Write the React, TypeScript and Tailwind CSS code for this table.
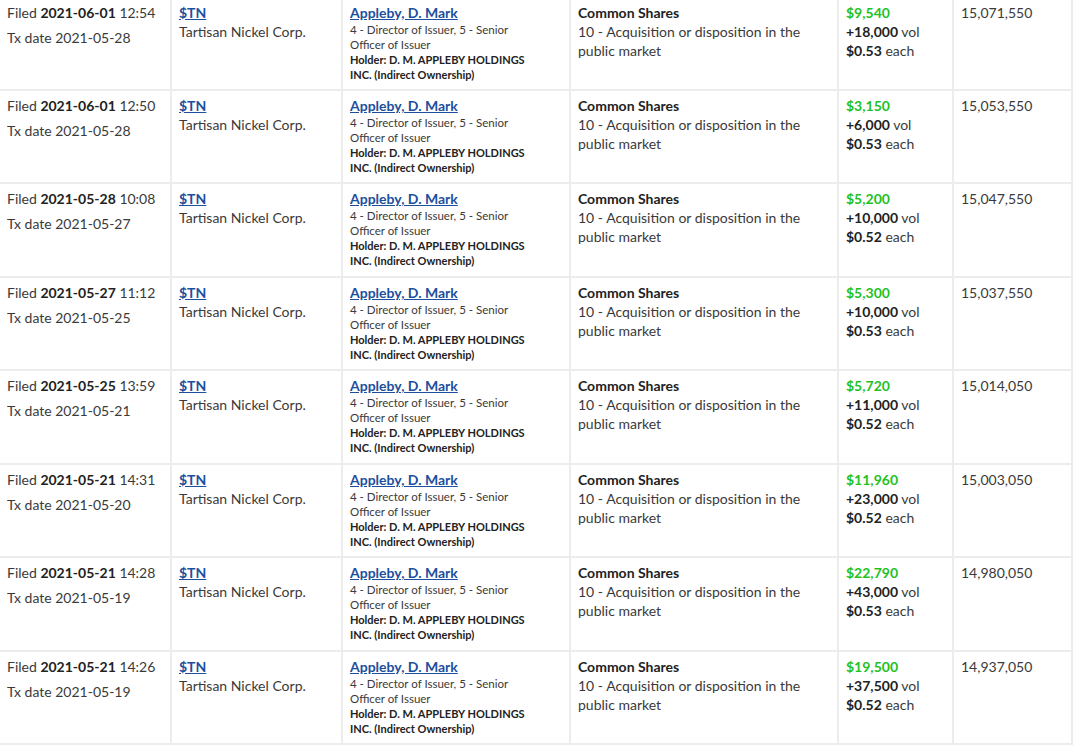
import React from 'react';

type Row = {
  filedDate: string;
  filedTime: string;
  txDate: string;
  value: string;
  vol: string;
  price: string;
  total: string;
};

const rows: Row[] = [
  { filedDate: '2021-06-01', filedTime: '12:54', txDate: '2021-05-28', value: '$9,540', vol: '+18,000', price: '$0.53', total: '15,071,550' },
  { filedDate: '2021-06-01', filedTime: '12:50', txDate: '2021-05-28', value: '$3,150', vol: '+6,000', price: '$0.53', total: '15,053,550' },
  { filedDate: '2021-05-28', filedTime: '10:08', txDate: '2021-05-27', value: '$5,200', vol: '+10,000', price: '$0.52', total: '15,047,550' },
  { filedDate: '2021-05-27', filedTime: '11:12', txDate: '2021-05-25', value: '$5,300', vol: '+10,000', price: '$0.53', total: '15,037,550' },
  { filedDate: '2021-05-25', filedTime: '13:59', txDate: '2021-05-21', value: '$5,720', vol: '+11,000', price: '$0.52', total: '15,014,050' },
  { filedDate: '2021-05-21', filedTime: '14:31', txDate: '2021-05-20', value: '$11,960', vol: '+23,000', price: '$0.52', total: '15,003,050' },
  { filedDate: '2021-05-21', filedTime: '14:28', txDate: '2021-05-19', value: '$22,790', vol: '+43,000', price: '$0.53', total: '14,980,050' },
  { filedDate: '2021-05-21', filedTime: '14:26', txDate: '2021-05-19', value: '$19,500', vol: '+37,500', price: '$0.52', total: '14,937,050' },
];

function InsiderRow({ r }: { r: Row }) {
  return (
    <div className="grid grid-cols-[172px_171px_228px_268px_115px_119px] h-[93.43px] border-b-2 border-[#ececec]">
      <div className="border-r-2 border-[#ececec] pl-[7px] pt-[5px]">
        <div className="leading-[19px]">
          Filed <b className="font-bold text-[#222]">{r.filedDate}</b> {r.filedTime}
        </div>
        <div className="leading-[19px] mt-[6px]">Tx date {r.txDate}</div>
      </div>
      <div className="border-r-2 border-[#ececec] pl-[7px] pt-[5px] leading-[19px]">
        <a href="#" className="font-bold text-[#1d4f9e] underline">$TN</a>
        <div>Tartisan Nickel Corp.</div>
      </div>
      <div className="border-r-2 border-[#ececec] pl-[7px] pt-[5px]">
        <a href="#" className="font-bold text-[#1d4f9e] underline leading-[19px] block">Appleby, D. Mark</a>
        <div className="max-w-[185px] leading-[15px]">
          <div className="text-[11.5px]">4 - Director of Issuer, 5 - Senior Officer of Issuer</div>
          <div className="text-[11px] font-bold text-[#222]">Holder: D. M. APPLEBY HOLDINGS INC. (Indirect Ownership)</div>
        </div>
      </div>
      <div className="border-r-2 border-[#ececec] pl-[7px] pr-[10px] pt-[5px] leading-[19px]">
        <div className="font-bold text-[#222]">Common Shares</div>
        <div>10 - Acquisition or disposition in the public market</div>
      </div>
      <div className="border-r-2 border-[#ececec] pl-[7px] pt-[5px] leading-[19px]">
        <div className="font-bold text-[#1fc21f]">{r.value}</div>
        <div><b className="text-[#222]">{r.vol}</b> vol</div>
        <div><b className="text-[#222]">{r.price}</b> each</div>
      </div>
      <div className="border-r-2 border-[#ececec] pl-[7px] pt-[5px] leading-[19px]">{r.total}</div>
    </div>
  );
}

export default function App() {
  return (
    <div className="w-[1073px] h-[745px] overflow-hidden bg-white text-[14px] text-[#3a3a3a] font-['Lato','Liberation_Sans',sans-serif]">
      <div className="-mt-[2.4px]">
        {rows.map((r, i) => (
          <InsiderRow key={i} r={r} />
        ))}
      </div>
    </div>
  );
}
